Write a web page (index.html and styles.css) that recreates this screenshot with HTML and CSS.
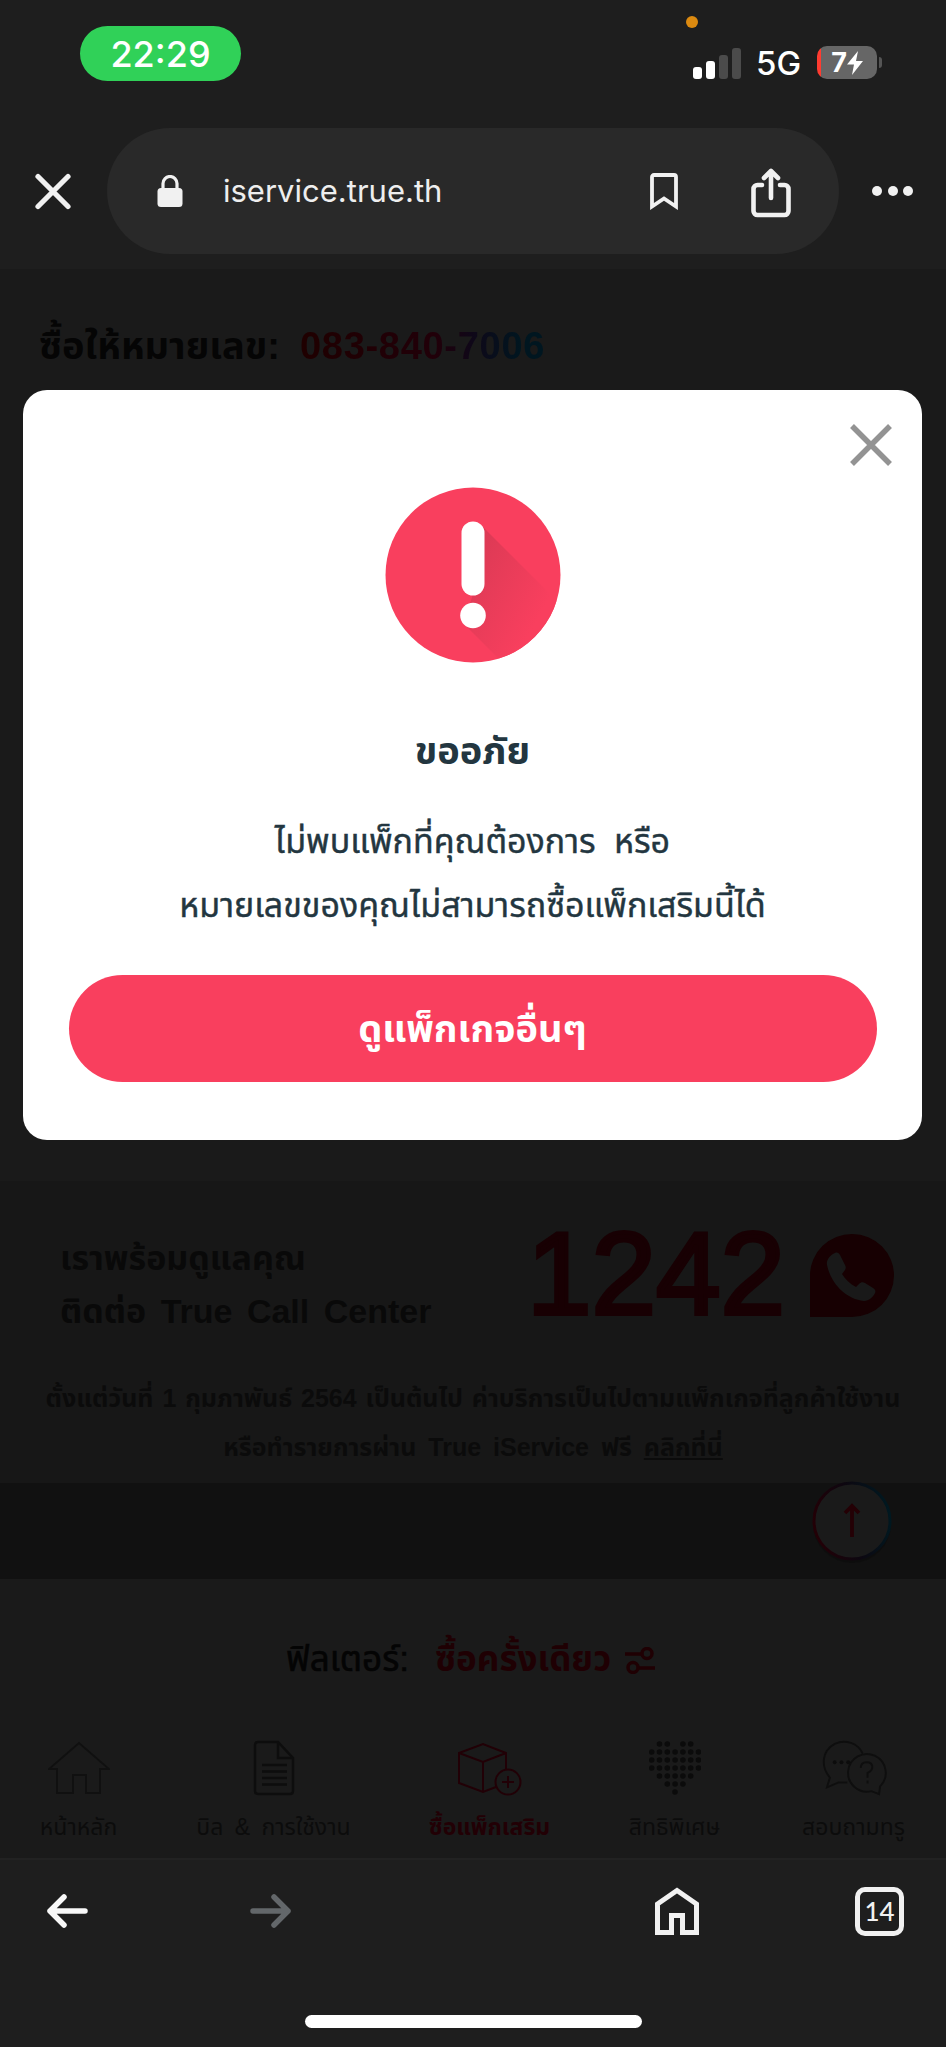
FILE: index.html
```
<!DOCTYPE html>
<html lang="th">
<head>
<meta charset="utf-8">
<title>True iService</title>
<link rel="stylesheet" href="styles.css">
</head>
<body>
<div class="screen">
  <header class="chrome-top">
    <div class="status">
      <div class="clock">22:29</div>
      <div class="radio">
        <i class="mic-dot"></i>
        <svg class="signal" width="48" height="31" viewBox="0 0 48 31"><rect x="0" y="19" width="9" height="12" rx="3" fill="#fff"/><rect x="13" y="13" width="9" height="18" rx="3" fill="#fff"/><rect x="26" y="7" width="9" height="24" rx="3" fill="#4b4b4b"/><rect x="39" y="0" width="9" height="31" rx="3" fill="#4b4b4b"/></svg>
        <span class="net">5G</span>
        <span class="battery"><span class="level">7</span><svg width="16" height="24" viewBox="0 0 16 24"><path d="M11 0L0 13.500H7L5 24L16 10H9Z" fill="#fff"/></svg></span>
        <i class="battery-tip"></i>
      </div>
    </div>
    <div class="address">
      <svg class="close-tab" width="36" height="37" viewBox="0 0 36 37"><path d="M3 3.500L33 33.500M33 3.500L3 33.500" stroke="#f1f1f1" stroke-width="5.200" stroke-linecap="round"/></svg>
      <div class="omnibox">
        <svg class="lock" width="26" height="33" viewBox="0 0 26 33"><path d="M6 14V8.500a7 7 0 0 1 14 0V14" fill="none" stroke="#f1f1f1" stroke-width="3.200"/><rect x="0.500" y="13" width="25" height="19" rx="3.500" fill="#f1f1f1"/></svg>
        <span class="url">iservice.true.th</span>
        <svg class="bookmark" width="28" height="37" viewBox="0 0 28 37"><path d="M2 4a2 2 0 0 1 2-2h20a2 2 0 0 1 2 2v29.500L14 25.500 2 33.500Z" fill="none" stroke="#f1f1f1" stroke-width="3.800"/></svg>
        <svg class="share" width="40" height="50" viewBox="0 0 40 50"><path d="M11 17H6.500a4 4 0 0 0-4 4v22a4 4 0 0 0 4 4h27a4 4 0 0 0 4-4V21a4 4 0 0 0-4-4H29M20 30V4M13 10l7-7 7 7" fill="none" stroke="#f1f1f1" stroke-width="4.600" stroke-linecap="round" stroke-linejoin="round"/></svg>
      </div>
      <svg class="more" width="42" height="12" viewBox="0 0 42 12"><g fill="#f1f1f1"><circle cx="5" cy="6" r="5"/><circle cx="21" cy="6" r="5"/><circle cx="36" cy="6" r="5"/></g></svg>
    </div>
  </header>

  <main class="page">
    <section class="buyer"><span class="t t-buyer">ซื้อให้หมายเลข:</span><span class="t phone">083-840-7006</span></section>
    <section class="support">
      <div class="support-head">
        <div class="support-text"><span class="t t-ready">เราพร้อมดูแลคุณ</span><span class="t t-contact">ติดต่อ True Call Center</span></div>
        <div class="hotline">1242</div>
        <svg class="call" width="84" height="83" viewBox="0 0 84 83"><path d="M0 83V41A42 41.500 0 1 1 42 83Z" fill="#170002"/><path d="M25 19c-5 2-9 7-8 12 4 19 19 34 37 36 5 0 9-4 11-8 1-2 0-4-2-5l-8-5c-2-1-4-1-6 1l-3 3c-6-3-11-8-14-13l3-4c1-2 1-3 0-5l-5-10c-1-2-3-3-5-2Z" fill="#191919"/></svg>
      </div>
      <p class="note"><span class="t t-note1">ตั้งแต่วันที่ 1 กุมภาพันธ์ 2564 เป็นต้นไป ค่าบริการเป็นไปตามแพ็กเกจที่ลูกค้าใช้งาน</span></p>
      <p class="note"><span class="t t-note2">หรือทำรายการผ่าน True iService ฟรี <u>คลิกที่นี่</u></span></p>
    </section>
    <div class="gap">
      <svg class="to-top" width="84" height="86" viewBox="0 0 84 86"><defs><linearGradient id="ring" x1="0" x2="1" y1=".6" y2=".4"><stop offset="0" stop-color="#230006"/><stop offset=".5" stop-color="#0d0710"/><stop offset="1" stop-color="#001820"/></linearGradient></defs><circle cx="42" cy="45" r="39" fill="#0c0c0c" opacity=".6"/><circle cx="42" cy="42" r="38" fill="#1a1a1a" stroke="url(#ring)" stroke-width="3"/><path d="M42 58V28M35 34l7-7 7 7" fill="none" stroke="#240005" stroke-width="3.800"/></svg>
    </div>
    <section class="filter"><span class="t t-filter">ฟิลเตอร์:</span><span class="t t-once">ซื้อครั้งเดียว</span>
      <svg width="30" height="27" viewBox="0 0 30 27"><g fill="none" stroke="#1f0003" stroke-width="3.500"><path d="M0 7H16M14 21H30"/><circle cx="22" cy="6.500" r="5"/><circle cx="8" cy="20.500" r="5"/></g></svg>
    </section>
    <nav class="tabs">
      <a class="tab tab-home"><svg width="62" height="56" viewBox="0 0 62 56"><path d="M9 29H1L31 3L61 29H52V53H38V35H25V53H9Z" fill="none" stroke="#101010" stroke-width="1.800"/></svg><span class="t">หน้าหลัก</span></a>
      <a class="tab tab-bill"><svg width="42" height="56" viewBox="0 0 42 56"><path d="M5 2H25L40 18V51q0 3-3 3H5q-3 0-3-3V5q0-3 3-3ZM25 2V18H40M9 25H34M9 31.500H34M9 38H34M9 44.500H34" fill="none" stroke="#0d0d0d" stroke-width="2.500"/></svg><span class="t">บิล &amp; การใช้งาน</span></a>
      <a class="tab tab-pack"><svg width="65" height="56" viewBox="0 0 65 56"><g fill="none" stroke="#210006" stroke-width="2"><path d="M39 47L26 52L2 43V13L26 4L49 13V30M2 13L26 22L49 13M26 22V52"/><circle cx="51" cy="42" r="12.500"/><path d="M45 42H57M51 36V48"/></g></svg><span class="t">ซื้อแพ็กเสริม</span></a>
      <a class="tab tab-perk"><svg width="52" height="56" viewBox="0 0 52 56"><g stroke="#0b0b0b" stroke-width="5.600" stroke-linecap="round" stroke-dasharray="0 7.800"><path d="M10.500 4H19M33.900 4H42M2.700 12H50M2.700 20H50M2.700 28H50M10.500 36H43M18.300 44H35M26 52H27"/></g></svg><span class="t">สิทธิพิเศษ</span></a>
      <a class="tab tab-ask"><svg width="66" height="56" viewBox="0 0 66 58"><g fill="none" stroke="#0e0e0e" stroke-width="2"><path d="M26 44H17L5 49L8 39C-2 27 0 11 13 4C24-1 37 3 42 14M60 48L59 56L51 53A19.500 19.500 0 1 1 60 48Z"/><path d="M40 29q0-6 6-6 6 0 6 5 0 4-5 6v5M47 42v3"/></g><g fill="#0c0c0c"><circle cx="13" cy="23" r="2"/><circle cx="20" cy="23" r="2"/><circle cx="27" cy="23" r="2"/></g></svg><span class="t">สอบถามทรู</span></a>
    </nav>
  </main>

  <footer class="chrome-bottom">
    <div class="tools">
      <svg class="back" width="41" height="34" viewBox="0 0 41 34"><path d="M38 17H3M17 3L3 17L17 31" fill="none" stroke="#f8f8f8" stroke-width="5.500" stroke-linecap="round" stroke-linejoin="round"/></svg>
      <svg class="forward" width="41" height="34" viewBox="0 0 41 34"><path d="M3 17H38M24 3L38 17L24 31" fill="none" stroke="#63676a" stroke-width="5.500" stroke-linecap="round" stroke-linejoin="round"/></svg>
      <svg class="home" width="44" height="49" viewBox="0 0 44 49"><path d="M2.500 17L22 3.500L41.500 17V45.500H27.500V28.500H16.500V45.500H2.500Z" fill="none" stroke="#f1f1f1" stroke-width="5"/></svg>
      <span class="count">14</span>
    </div>
    <i class="indicator"></i>
  </footer>

  <div class="dialog" role="dialog">
    <svg class="dismiss" width="44" height="44" viewBox="0 0 44 44"><path d="M3 3L41 41M41 3L3 41" stroke="#939393" stroke-width="5.500"/></svg>
    <svg class="alert" width="176" height="176" viewBox="0 0 176 176"><defs><linearGradient id="shade" x1=".1" y1=".2" x2=".75" y2=".7"><stop offset="0" stop-color="#dc3a55"/><stop offset="1" stop-color="#f93f5e"/></linearGradient><clipPath id="disc"><circle cx="88" cy="88" r="87.500"/></clipPath></defs><circle cx="88" cy="88" r="87.500" fill="#f93f5e"/><path clip-path="url(#disc)" d="M97 39L176 118V176H118L79 137L90 100Z" fill="url(#shade)"/><rect x="76.500" y="34.500" width="23" height="74" rx="11.500" fill="#fff"/><circle cx="88" cy="128.500" r="12.800" fill="#fff"/></svg>
    <h1><span class="t t-sorry">ขออภัย</span></h1>
    <p><span class="t t-msg1">ไม่พบแพ็กที่คุณต้องการ หรือ</span></p>
    <p><span class="t t-msg2">หมายเลขของคุณไม่สามารถซื้อแพ็กเสริมนี้ได้</span></p>
    <button><span class="t t-btn">ดูแพ็กเกจอื่นๆ</span></button>
  </div>
</div>
</body>
</html>
```
FILE: styles.css
```
* { box-sizing: border-box; }
body { margin: 0; background: #1e1e1e; font-family: "Liberation Sans", "Noto Sans Thai", "Noto Sans", sans-serif; }
svg { display: block; flex: none; }
p, h1 { margin: 0; }
.t { display: inline-block; white-space: nowrap; }
.screen { position: relative; width: 946px; height: 2047px; overflow: hidden; display: flex; flex-direction: column; }

/* browser chrome, top */
.chrome-top { height: 269px; background: #1e1e1e; flex: none; }
.status { height: 128px; display: flex; justify-content: space-between; padding: 26px 64px 0 80px; }
.clock { width: 161px; height: 55px; border-radius: 28px; background: #30d158; color: #fff; font: 500 36px/56px Inter, sans-serif; text-align: center; }
.radio { position: relative; display: flex; align-items: flex-end; height: 53px; }
.mic-dot { position: absolute; left: -6px; top: -10px; width: 12px; height: 12px; border-radius: 50%; background: #dc8a10; }
.signal { margin: 0 15px 0 1px; }
.net { width: 61px; font: 500 33px/31px Inter, sans-serif; color: #fff; }
.battery { width: 60px; height: 33px; border-radius: 10px; background: linear-gradient(90deg, #ff3b30 4px, #666 4px); display: flex; align-items: center; justify-content: center; gap: 0; color: #fff; }
.level { font: 700 27px/33px Inter, sans-serif; }
.battery-tip { width: 3px; height: 11px; margin: 0 0 11px 2px; border-radius: 0 3px 3px 0; background: #555; }
.address { display: flex; align-items: center; height: 126px; padding-left: 35px; }
.omnibox { width: 732px; height: 126px; margin: 0 33px 0 36px; border-radius: 63px; background: #292929; display: flex; align-items: center; padding-left: 50px; flex: none; }
.url { width: 427px; margin-left: 40px; font: 400 31px/40px Inter, sans-serif; color: #eee; }
.share { margin: 4px 0 0 73px; }

/* dimmed page */
.page { height: 1589px; background: #1a1a1a; flex: none; display: flex; flex-direction: column; }
.buyer { height: 912px; padding: 50px 0 0 39px; display: flex; font: 700 38px/54px "Liberation Sans", "Noto Sans Thai", sans-serif; color: #050505; }
.t-buyer { width: 261px; }
.phone { color: transparent; background: linear-gradient(90deg, #1f0000, #210009 55%, #0f0718 70%, #001620 90%); background-clip: text; -webkit-background-clip: text; align-self: flex-start; letter-spacing: .7px; }
.support { height: 302px; background: #171717; color: #090909; font-weight: 700; padding-top: 45px; }
.support-head { display: flex; height: 148px; padding-left: 60px; }
.support-text { width: 467px; display: flex; flex-direction: column; align-items: flex-start; font-size: 34px; line-height: 53px; padding-top: 6px; }
.t-contact { word-spacing: 5px; }
.hotline { font-size: 116px; line-height: 96px; font-weight: 400; -webkit-text-stroke: 4px #180003; color: #180003; width: 283px; }
.call { margin-top: 8px; }
.note { height: 49px; font-size: 25px; line-height: 48px; text-align: center; color: #0b0b0b; }
.t-note1 { word-spacing: 2px; }
.t-note2 { word-spacing: 5px; }
.gap { height: 96px; background: #111; padding-left: 810px; }
.to-top { margin-top: -4px; }
.filter { height: 148px; display: flex; justify-content: flex-start; align-items: center; padding: 15px 0 0 286px; font-size: 35px; color: #040404; }
.t-filter { width: 149px; -webkit-text-stroke: .6px #040404; }
.t-once { width: 190px; color: #1f0003; font-weight: 700; }
.tabs { display: flex; height: 131px; padding: 13px 0 0 20px; }
.tab { display: flex; flex-direction: column; align-items: center; font-size: 23px; line-height: 44px; color: #0c0c0c; }
.tab .t { margin-top: 9px; }
.tab-home { width: 117px; }
.tab-bill { width: 273px; word-spacing: 5px; }
.tab-pack { width: 159px; color: #220005; font-weight: 700; }
.tab-perk { width: 211px; }
.tab-ask { width: 147px; }

/* browser chrome, bottom */
.chrome-bottom { height: 189px; background: #1e1e1e; border-top: 2px solid #222; padding-top: 26px; }
.tools { display: flex; align-items: center; height: 50px; padding-left: 47px; }
.forward { margin-left: 162px; }
.home { margin-left: 364px; }
.count { width: 49px; height: 49px; margin-left: 156px; border: 5px solid #f1f1f1; border-radius: 10px; font: 500 26px/39px Lato, sans-serif; color: #f1f1f1; text-align: center; }
.indicator { display: block; width: 337px; height: 13px; margin: 79px 0 0 305px; border-radius: 7px; background: #fff; }

/* error dialog */
.dialog { position: absolute; left: 23px; top: 390px; width: 899px; height: 750px; padding: 33px 0 0; border-radius: 24px; background: #fff; color: #233640; display: flex; flex-direction: column; align-items: center; }
.dismiss { align-self: flex-end; margin-right: 29px; }
.alert { margin-top: 20px; }
h1 { height: 100px; padding-top: 60px; font-size: 38px; line-height: 56px; margin-bottom: 46px; }
.dialog p { height: 64px; font-size: 34px; line-height: 64px; -webkit-text-stroke: .4px #233640; }
.t-msg1 { word-spacing: 9px; }
button { width: 808px; height: 107px; margin-top: 38px; border: 0; border-radius: 54px; background: #f93f5e; color: #fff; font: 700 38px/60px "Liberation Sans", "Noto Sans Thai", sans-serif; }
```
